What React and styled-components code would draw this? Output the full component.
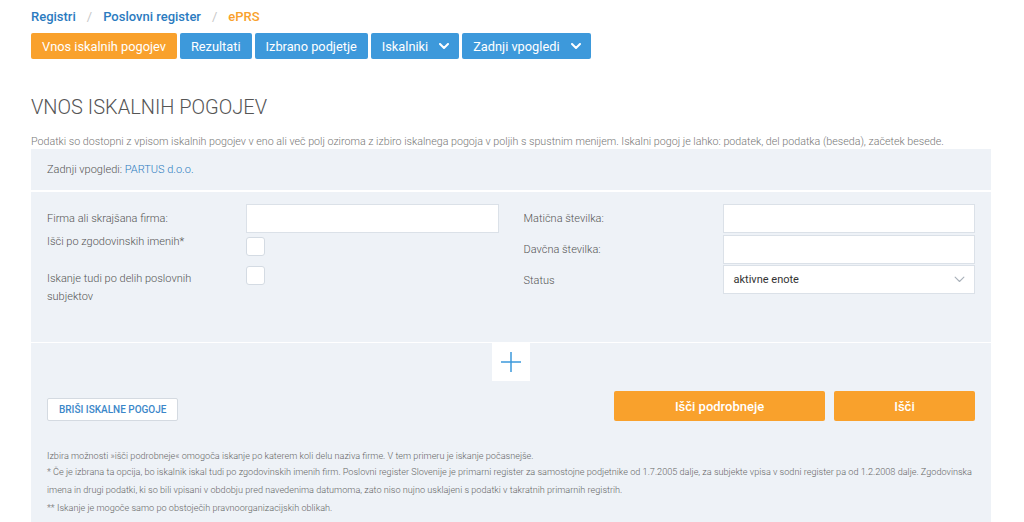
import React from 'react';
import styled, { createGlobalStyle } from 'styled-components';

const Global = createGlobalStyle`
  body {
    margin: 0;
    background: #fff;
    font-family: Roboto, "Helvetica Neue", Arial, sans-serif;
  }
`;

const Page = styled.div`
  width: 960px;
  padding: 7px 0 0 31px;
`;

const Crumbs = styled.div`
  display: flex;
  align-items: center;
  height: 18px;
  font-size: 13px;
  font-weight: 500;
`;

const Crumb = styled.a`
  color: ${p => (p.$active ? '#f9a12c' : '#2b7bc0')};
  text-decoration: none;
`;

const Sep = styled.span`
  color: #c8c8c8;
  font-weight: 400;
  padding: 0 11px;
`;

const Tabs = styled.div`
  display: flex;
  gap: 3px;
  margin-top: 8px;
`;

const Tab = styled.button`
  display: flex;
  align-items: center;
  gap: 11px;
  height: 26px;
  padding: 0 ${p => (p.$menu ? '10px' : '11px')} 0 11px;
  border: none;
  border-radius: 2px;
  background: ${p => (p.$active ? '#f9a12c' : '#3d99db')};
  color: #fff;
  font-family: Roboto, sans-serif;
  font-size: 12.8px;
  cursor: pointer;
`;

const Title = styled.h1`
  margin: 36px 0 0;
  font-size: 20px;
  font-weight: 300;
  color: #555;
  line-height: 24px;
`;

const Intro = styled.p`
  margin: 16px 0 0;
  font-size: 10.7px;
  font-weight: 300;
  color: #777;
  line-height: 14px;
`;

const Panel = styled.div`
  background: #eef2f7;
`;

const Recent = styled.div`
  padding: 12px 16px;
  height: 17px;
  line-height: 17px;
  font-size: 11px;
  font-weight: 300;
  color: #555;
  border-bottom: 2px solid #fff;
  a {
    color: #2b7bc0;
    text-decoration: none;
  }
`;

const Form = styled.div`
  display: grid;
  grid-template-columns: 1fr 1fr;
  column-gap: 25px;
  padding: 12px 16px 0;
  height: 138px;
  border-bottom: 1px solid #fff;
`;

const Column = styled.div`
  display: flex;
  flex-direction: column;
`;

const Row = styled.div`
  display: grid;
  grid-template-columns: 199px 1fr;
  align-items: start;
  height: ${p => p.$h || 30}px;
`;

const Label = styled.label`
  padding-top: ${p => p.$pt || 0}px;
  padding-right: 14px;
  font-size: 11px;
  font-weight: 300;
  color: #555;
  line-height: 18px;
`;

const Input = styled.input`
  box-sizing: border-box;
  width: 100%;
  height: 29px;
  margin: 0;
  border: 1px solid #dbe1e8;
  background: #fff;
  outline: none;
`;

const Check = styled.span`
  display: block;
  width: 17px;
  height: 17px;
  margin-top: ${p => p.$mt || 0}px;
  border: 1px solid #d4dbe3;
  border-radius: 3px;
  background: #fff;
`;

const Select = styled.div`
  box-sizing: border-box;
  display: flex;
  align-items: center;
  justify-content: space-between;
  height: 29px;
  padding: 0 9px 0 10px;
  border: 1px solid #dbe1e8;
  background: #fff;
  font-size: 11px;
  color: #333;
`;

const Actions = styled.div`
  display: flex;
  flex-direction: column;
  align-items: center;
  padding: 0 16px;
`;

const AddButton = styled.button`
  display: flex;
  align-items: center;
  justify-content: center;
  width: 38px;
  height: 38px;
  padding: 0;
  border: none;
  background: #fff;
  cursor: pointer;
`;

const ButtonRow = styled.div`
  display: flex;
  align-items: flex-end;
  width: 100%;
  margin-top: 10px;
`;

const ClearButton = styled.button`
  height: 23px;
  padding: 0 11px;
  border: 1px solid #d4dae1;
  border-radius: 2px;
  background: #fff;
  color: #3b87c9;
  font-family: Roboto, sans-serif;
  font-size: 10px;
  font-weight: 500;
  white-space: nowrap;
  cursor: pointer;
`;

const SearchButton = styled.button`
  width: ${p => p.$w}px;
  height: 30px;
  margin-left: ${p => p.$ml};
  border: none;
  border-radius: 2px;
  background: #f9a12c;
  color: #fff;
  font-family: Roboto, sans-serif;
  font-size: 13px;
  font-weight: 500;
  cursor: pointer;
`;

const Notes = styled.div`
  padding: 28px 16px 12px;
  font-size: 9.15px;
  font-weight: 300;
  color: #666;
  line-height: 18px;
  p {
    margin: 0;
  }
  p:first-child {
    line-height: 14px;
  }
`;

const Chevron = ({ color = '#fff', size = 10, stroke = 2 }) => (
  <svg width={size} height={size * 0.6} viewBox="0 0 10 6" fill="none">
    <path d="M1 1l4 4 4-4" stroke={color} strokeWidth={stroke} strokeLinecap="round" strokeLinejoin="round" />
  </svg>
);

export default function App() {
  return (
    <Page>
      <Global />
      <Crumbs>
        <Crumb href="#">Registri</Crumb>
        <Sep>/</Sep>
        <Crumb href="#">Poslovni register</Crumb>
        <Sep>/</Sep>
        <Crumb $active>ePRS</Crumb>
      </Crumbs>

      <Tabs>
        <Tab $active>Vnos iskalnih pogojev</Tab>
        <Tab>Rezultati</Tab>
        <Tab>Izbrano podjetje</Tab>
        <Tab $menu>Iskalniki <Chevron /></Tab>
        <Tab $menu>Zadnji vpogledi <Chevron /></Tab>
      </Tabs>

      <Title>VNOS ISKALNIH POGOJEV</Title>
      <Intro>
        Podatki so dostopni z vpisom iskalnih pogojev v eno ali več polj oziroma z izbiro iskalnega pogoja v poljih s spustnim menijem. Iskalni pogoj je lahko: podatek, del podatka (beseda), začetek besede.
      </Intro>

      <Panel>
        <Recent>
          Zadnji vpogledi: <a href="#">PARTUS d.o.o.</a>
        </Recent>

        <Form>
          <Column>
            <Row $h={29}>
              <Label $pt={6}>Firma ali skrajšana firma:</Label>
              <Input />
            </Row>
            <Row>
              <Label $pt={0}>Išči po zgodovinskih imenih*</Label>
              <Check $mt={4} />
            </Row>
            <Row $h={50}>
              <Label $pt={7}>Iskanje tudi po delih poslovnih subjektov</Label>
              <Check $mt={3} />
            </Row>
          </Column>
          <Column>
            <Row $h={31}>
              <Label $pt={6}>Matična številka:</Label>
              <Input />
            </Row>
            <Row>
              <Label $pt={6}>Davčna številka:</Label>
              <Input />
            </Row>
            <Row>
              <Label $pt={7}>Status</Label>
              <Select>
                aktivne enote
                <Chevron color="#a9b1ba" size={11} stroke={1} />
              </Select>
            </Row>
          </Column>
        </Form>

        <Actions>
          <AddButton aria-label="Dodaj">
            <svg width="22" height="22" viewBox="0 0 22 22">
              <path d="M11 1v20M1 11h20" stroke="#3d99db" strokeWidth="1.5" />
            </svg>
          </AddButton>
          <ButtonRow>
            <ClearButton>BRIŠI ISKALNE POGOJE</ClearButton>
            <SearchButton $w={211} $ml="auto">Išči podrobneje</SearchButton>
            <SearchButton $w={141} $ml="9px">Išči</SearchButton>
          </ButtonRow>
        </Actions>

        <Notes>
          <p>Izbira možnosti »išči podrobneje« omogoča iskanje po katerem koli delu naziva firme. V tem primeru je iskanje počasnejše.</p>
          <p>* Če je izbrana ta opcija, bo iskalnik iskal tudi po zgodovinskih imenih firm. Poslovni register Slovenije je primarni register za samostojne podjetnike od 1.7.2005 dalje, za subjekte vpisa v sodni register pa od 1.2.2008 dalje. Zgodovinska imena in drugi podatki, ki so bili vpisani v obdobju pred navedenima datumoma, zato niso nujno usklajeni s podatki v takratnih primarnih registrih.</p>
          <p>** Iskanje je mogoče samo po obstoječih pravnoorganizacijskih oblikah.</p>
        </Notes>
      </Panel>
    </Page>
  );
}
